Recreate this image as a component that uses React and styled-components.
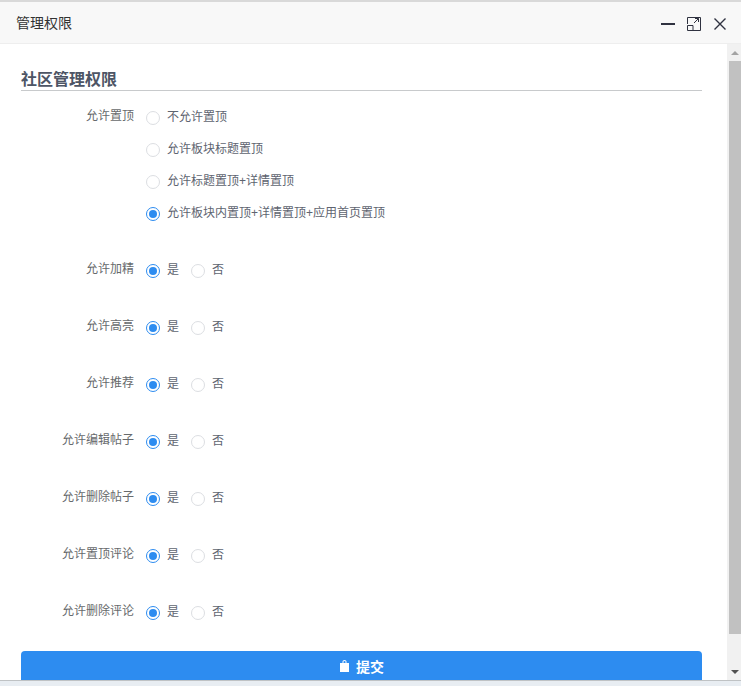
import React from 'react';
import styled, { createGlobalStyle } from 'styled-components';

const Global = createGlobalStyle`
  html, body {
    margin: 0;
    padding: 0;
    height: 100%;
    overflow: hidden;
    background: #e8edf2;
  }
  * { box-sizing: border-box; }
  body {
    font-family: "Liberation Sans", "Noto Sans CJK SC", sans-serif;
  }
`;

const Dialog = styled.div`
  width: 741px;
  height: 681px;
  background: #fff;
  border-top: 2px solid #d9d9d9;
  border-bottom: 1px solid #bfc2c4;
  display: flex;
  flex-direction: column;
  overflow: hidden;
`;

const Header = styled.div`
  height: 42px;
  flex: none;
  background: #f8f8f8;
  border-bottom: 1px solid #eee;
  display: flex;
  align-items: center;
  justify-content: space-between;
  padding: 0 14px 0 16px;
`;

const HeaderTitle = styled.span`
  font-size: 14px;
  color: #333;
  margin-bottom: 2px;
`;

const Tools = styled.div`
  display: flex;
  align-items: center;
  gap: 10px;
  margin-top: 2px;
`;

const ToolIcon = styled.svg`
  width: 16px;
  height: 16px;
  display: block;
  fill: none;
  stroke: #2f3240;
`;

const Main = styled.div`
  flex: 1;
  min-height: 0;
  display: flex;
`;

const Content = styled.div`
  flex: 1;
  min-width: 0;
  padding: 24px 25px 0 21px;
`;

const SectionTitle = styled.h3`
  margin: 0 0 10px;
  height: 23px;
  line-height: 23px;
  font-size: 16px;
  font-weight: 700;
  color: #4d5565;
  border-bottom: 1px solid #c8cacc;
`;

const Group = styled.div`
  display: flex;
  margin-bottom: 25px;
`;

const Label = styled.div`
  width: 113px;
  flex: none;
  text-align: right;
  font-size: 12px;
  line-height: 31px;
  color: #676a6c;
`;

const Options = styled.div`
  margin-left: 12px;
  display: flex;
  flex-direction: ${props => (props.stacked ? 'column' : 'row')};
`;

const Option = styled.label`
  height: 32px;
  padding-bottom: 4px;
  display: flex;
  align-items: center;
  margin-right: 12px;
  font-size: 12px;
  color: #5e6470;
`;

const Circle = styled.span`
  width: 14px;
  height: 14px;
  border-radius: 50%;
  flex: none;
  margin: 6px 7px 0 0;
  background: #fff;
  border: 1px solid ${props => (props.checked ? '#2d8cf0' : '#dcdee2')};
  display: flex;
  align-items: center;
  justify-content: center;
  &::after {
    content: '';
    display: ${props => (props.checked ? 'block' : 'none')};
    width: 8px;
    height: 8px;
    border-radius: 50%;
    background: #2d8cf0;
  }
`;

const SubmitButton = styled.button`
  width: 100%;
  height: 32px;
  margin-top: -2px;
  padding: 0 0 2px;
  border: 0;
  border-radius: 4px;
  background: #2d8cf0;
  color: #fff;
  font-family: inherit;
  font-size: 14px;
  font-weight: 700;
  display: flex;
  align-items: center;
  justify-content: center;
  gap: 6px;
`;

const Scrollbar = styled.div`
  width: 14px;
  flex: none;
  background: #f1f1f1;
  display: flex;
  flex-direction: column;
  align-items: flex-end;
`;

const Arrow = styled.div`
  width: 12px;
  height: 17px;
  flex: none;
  display: flex;
  align-items: center;
  justify-content: center;
  &::after {
    content: '';
    border-left: 4px solid transparent;
    border-right: 4px solid transparent;
    border-${props => (props.down ? 'top' : 'bottom')}: 4px solid ${props => (props.down ? '#505050' : '#a3a3a3')};
  }
`;

const Thumb = styled.div`
  width: 12px;
  height: 573px;
  flex: none;
  background: #c1c1c1;
`;

const Spacer = styled.div`
  flex: 1;
`;

const Radio = ({ checked, children }) => (
  <Option>
    <Circle checked={checked} />
    {children}
  </Option>
);

const YesNo = ({ label }) => (
  <Group>
    <Label>{label}</Label>
    <Options>
      <Radio checked>是</Radio>
      <Radio>否</Radio>
    </Options>
  </Group>
);

const rows = ['允许加精', '允许高亮', '允许推荐', '允许编辑帖子', '允许删除帖子', '允许置顶评论', '允许删除评论'];

const App = () => (
  <>
    <Global />
    <Dialog>
      <Header>
        <HeaderTitle>管理权限</HeaderTitle>
        <Tools>
          <ToolIcon viewBox="0 0 16 16" strokeWidth="2">
            <path d="M2 8h14" />
          </ToolIcon>
          <ToolIcon viewBox="0 0 16 16">
            <path d="M2.500 8V1.500h13v13H8M2.500 9.500H8v5H2.500zM9 7l4.500-4.500M10 2.500h3.500V6" />
          </ToolIcon>
          <ToolIcon viewBox="0 0 16 16" strokeWidth="1.4">
            <path d="M3.500 2.500l11 11M14.500 2.500l-11 11" />
          </ToolIcon>
        </Tools>
      </Header>
      <Main>
        <Content>
          <SectionTitle>社区管理权限</SectionTitle>
          <Group>
            <Label>允许置顶</Label>
            <Options stacked>
              <Radio>不允许置顶</Radio>
              <Radio>允许板块标题置顶</Radio>
              <Radio>允许标题置顶+详情置顶</Radio>
              <Radio checked>允许板块内置顶+详情置顶+应用首页置顶</Radio>
            </Options>
          </Group>
          {rows.map(label => <YesNo key={label} label={label} />)}
          <SubmitButton>
            <svg width="11" height="12" viewBox="0 0 11 12" fill="#fff">
              <path d="M1 3h2.500V1.500Q3.500 0 5.500 0t2 1.500V3H10v9H1zM4.500 3h2V1.500q0-.6-1-.6t-1 .6z" />
            </svg>
            提交
          </SubmitButton>
        </Content>
        <Scrollbar>
          <Arrow />
          <Thumb />
          <Spacer />
          <Arrow down />
        </Scrollbar>
      </Main>
    </Dialog>
  </>
);

export default App;
